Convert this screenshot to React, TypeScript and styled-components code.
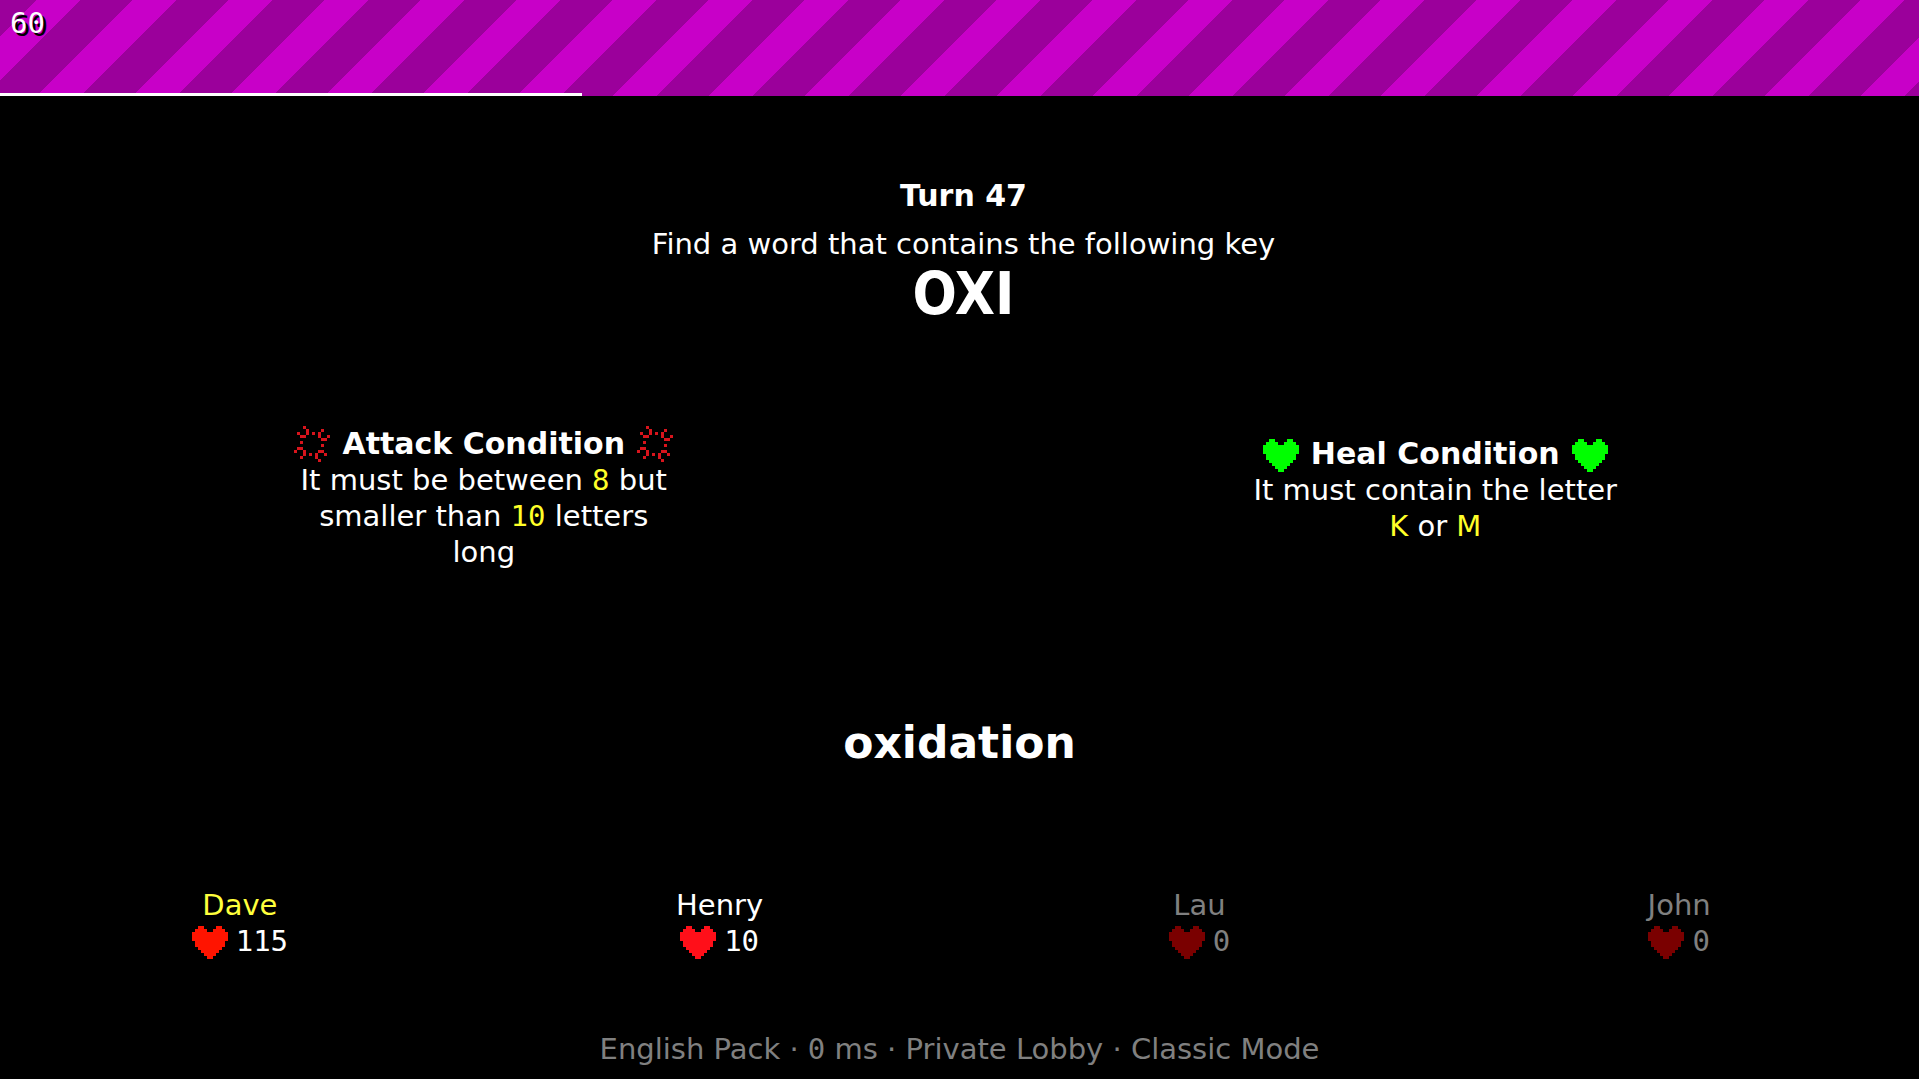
import React, { useState } from 'react';
import styled, { createGlobalStyle } from 'styled-components';

const GlobalStyle = createGlobalStyle`
  * { box-sizing: border-box; }
  body {
    margin: 0;
    background: #000;
    color: #fff;
    font-family: "DejaVu Sans", "Liberation Sans", sans-serif;
    font-size: 29px;
    line-height: 36px;
  }
  h1, h2, p, ul { margin: 0; padding: 0; }
`;

const Page = styled.div`
  min-height: 100vh;
  display: flex;
  flex-direction: column;
`;

const Banner = styled.header`
  height: 96px;
  padding-top: 5px;
  display: flex;
  flex-direction: column;
  justify-content: space-between;
  background-color: #9b009b;
  background-image: linear-gradient(
    135deg,
    #9b009b 19%, #c800c8 19%, #c800c8 42%,
    #9b009b 42%, #9b009b 69%,
    #c800c8 69%, #c800c8 92%, #9b009b 92%
  );
  background-size: 96px 96px;
`;

const Num = styled.span`
  font-family: "DejaVu Sans Mono", "Liberation Mono", monospace;
`;

const FrameCount = styled(Num)`
  padding-left: 10px;
  text-shadow: 3px 3px 0 #000;
`;

const TimeBar = styled.div`
  height: 3px;
  background: #fff;
`;

const Main = styled.main`
  padding-top: 82px;
`;

const Prompt = styled.section`
  display: flex;
  flex-direction: column;
  align-items: center;
  padding-left: 8px;
  text-align: center;
`;

const Turn = styled.h1`
  font-size: 30px;
  line-height: 36px;
  margin-bottom: 12px;
`;

const Key = styled.strong`
  font-family: "DejaVu Sans Condensed", "DejaVu Sans", sans-serif;
  font-size: 58px;
  line-height: 64px;
`;

const Conditions = styled.section`
  margin-top: 100px;
  padding: 0 8px;
  display: grid;
  grid-template-columns: 1fr 1fr;
  align-items: center;
  justify-items: center;
`;

const Condition = styled.article`
  min-height: 124px;
  text-align: center;
`;

const ConditionTitle = styled.h2`
  display: flex;
  align-items: flex-end;
  justify-content: center;
  gap: 12px;
  font-size: 30px;
  line-height: 36px;
`;

const Mark = styled.span`
  color: #ffff28;
`;

const MarkNum = styled(Num)`
  color: #ffff28;
`;

const WordInput = styled.input`
  display: block;
  width: 100%;
  height: 56px;
  margin-top: 145px;
  padding: 0;
  border: 0;
  outline: 0;
  background: transparent;
  color: #fff;
  text-align: center;
  font: bold 44px/56px "DejaVu Sans", "Liberation Sans", sans-serif;
`;

const Players = styled.ul`
  margin-top: 116px;
  display: grid;
  grid-template-columns: repeat(4, 1fr);
  list-style: none;
`;

const PlayerItem = styled.li<{ $out: boolean }>`
  display: flex;
  flex-direction: column;
  align-items: center;
  color: ${(p) => (p.$out ? '#808080' : '#fff')};
`;

const PlayerName = styled.span<{ $active: boolean }>`
  color: ${(p) => (p.$active ? '#ffff3c' : 'inherit')};
`;

const Health = styled.span`
  display: flex;
  align-items: flex-end;
  gap: 8px;
`;

const Footer = styled.footer`
  margin-top: auto;
  padding-bottom: 12px;
  text-align: center;
  color: #808080;
`;

const Sprite = styled.svg`
  display: block;
  flex: none;
  width: 36px;
`;

const HEART = [
  '..##....##..',
  '.####..####.',
  '############',
  '############',
  '############',
  '.##########.',
  '.##########.',
  '..########..',
  '...######...',
  '....####....',
  '.....##.....',
];

const ANGER = [
  '...#........',
  '....#....#..',
  '.#..#.#.#...',
  '..##....#..#',
  '.........##.',
  '..#.........',
  '.........#..',
  '.##.........',
  '#..#....##..',
  '...#.#.#..#.',
  '..#....#....',
  '........#...',
];

function PixelSprite({ rows, color }: { rows: string[]; color: string }) {
  return (
    <Sprite viewBox={`0 0 12 ${rows.length}`} fill={color} shapeRendering="crispEdges" aria-hidden="true">
      {rows.flatMap((row, y) =>
        [...row].map((cell, x) =>
          cell === '#' ? <rect key={`${x}-${y}`} x={x} y={y} width="1" height="1" /> : null,
        ),
      )}
    </Sprite>
  );
}

const players = [
  { name: 'Dave', health: 115, active: true, heart: '#ff1400' },
  { name: 'Henry', health: 10, active: false, heart: '#ff0f19' },
  { name: 'Lau', health: 0, active: false, heart: '#7a0000' },
  { name: 'John', health: 0, active: false, heart: '#7a0000' },
];

const turn = { elapsed: 91, total: 300 };

export default function App() {
  const [word, setWord] = useState('oxidation');
  return (
    <Page>
      <GlobalStyle />
      <Banner>
        <FrameCount>60</FrameCount>
        <TimeBar
          role="progressbar"
          aria-label="Turn time"
          aria-valuenow={turn.elapsed}
          aria-valuemax={turn.total}
          style={{ width: `${(turn.elapsed / turn.total) * 100}%` }}
        />
      </Banner>
      <Main>
        <Prompt>
          <Turn>Turn 47</Turn>
          <p>Find a word that contains the following key</p>
          <Key>OXI</Key>
        </Prompt>
        <Conditions>
          <Condition>
            <ConditionTitle>
              <PixelSprite rows={ANGER} color="#d8141c" />
              Attack Condition
              <PixelSprite rows={ANGER} color="#d8141c" />
            </ConditionTitle>
            <p>
              It must be between <MarkNum>8</MarkNum> but
              <br />
              smaller than <MarkNum>10</MarkNum> letters
              <br />
              long
            </p>
          </Condition>
          <Condition>
            <ConditionTitle>
              <PixelSprite rows={HEART} color="#00ff00" />
              Heal Condition
              <PixelSprite rows={HEART} color="#00ff00" />
            </ConditionTitle>
            <p>
              It must contain the letter
              <br />
              <Mark>K</Mark> or <Mark>M</Mark>
            </p>
          </Condition>
        </Conditions>
        <WordInput
          aria-label="Your word"
          value={word}
          spellCheck={false}
          onChange={(e) => setWord(e.target.value)}
        />
        <Players>
          {players.map((p) => (
            <PlayerItem key={p.name} $out={p.health === 0}>
              <PlayerName $active={p.active}>{p.name}</PlayerName>
              <Health>
                <PixelSprite rows={HEART} color={p.heart} />
                <Num>{p.health}</Num>
              </Health>
            </PlayerItem>
          ))}
        </Players>
      </Main>
      <Footer>
        English Pack · <Num>0</Num> ms · Private Lobby · Classic Mode
      </Footer>
    </Page>
  );
}
